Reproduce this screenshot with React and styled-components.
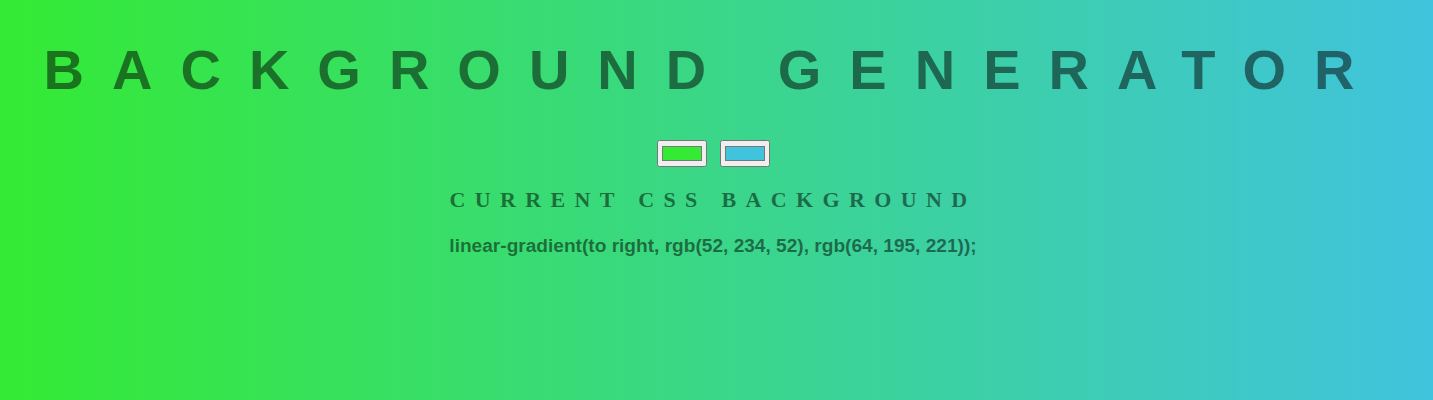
import React, { useState } from 'react'
import styled, { createGlobalStyle } from 'styled-components'

const GlobalStyle = createGlobalStyle`
  html, body {
    margin: 0;
    height: 100%;
  }
  body {
    font-family: "Liberation Sans", Arial, sans-serif;
  }
  #root {
    height: 100%;
  }
`

const Page = styled.div`
  min-height: 400px;
  box-sizing: border-box;
  padding: 8px 15px 8px 8px;
  text-align: center;
  color: rgba(0, 0, 0, 0.5);
  background: ${(p) => p.bg};
`

const Title = styled.h1`
  margin: 30px 0 0;
  font: 700 56px "Liberation Sans", Arial, sans-serif;
  text-transform: uppercase;
  letter-spacing: 0.5em;
  line-height: 64px;
`

const Pickers = styled.div`
  display: flex;
  justify-content: center;
  gap: 13px;
  margin-top: 38px;
`

const ColorInput = styled.input`
  width: 50px;
  height: 27px;
  margin: 0;
`

const Heading = styled.h3`
  margin: 20px 0 0;
  font: 700 22px "Liberation Serif", "Times New Roman", serif;
  text-transform: uppercase;
  letter-spacing: 9.35px;
`

const Code = styled.p`
  margin: 22px 0 0;
  font: 700 19.1px "Liberation Sans", Arial, sans-serif;
`

const toRgb = (hex) => {
  const n = parseInt(hex.slice(1), 16)
  return `rgb(${(n >> 16) & 255}, ${(n >> 8) & 255}, ${n & 255})`
}

const App = () => {
  const [left, setLeft] = useState('#34ea34')
  const [right, setRight] = useState('#40c3dd')
  const gradient = `linear-gradient(to right, ${toRgb(left)}, ${toRgb(right)})`

  return (
    <Page bg={gradient}>
      <GlobalStyle />
      <Title>Background Generator</Title>
      <Pickers>
        <ColorInput type="color" value={left} onChange={(e) => setLeft(e.target.value)} />
        <ColorInput type="color" value={right} onChange={(e) => setRight(e.target.value)} />
      </Pickers>
      <Heading>Current CSS Background</Heading>
      <Code>{gradient};</Code>
    </Page>
  )
}

export default App
